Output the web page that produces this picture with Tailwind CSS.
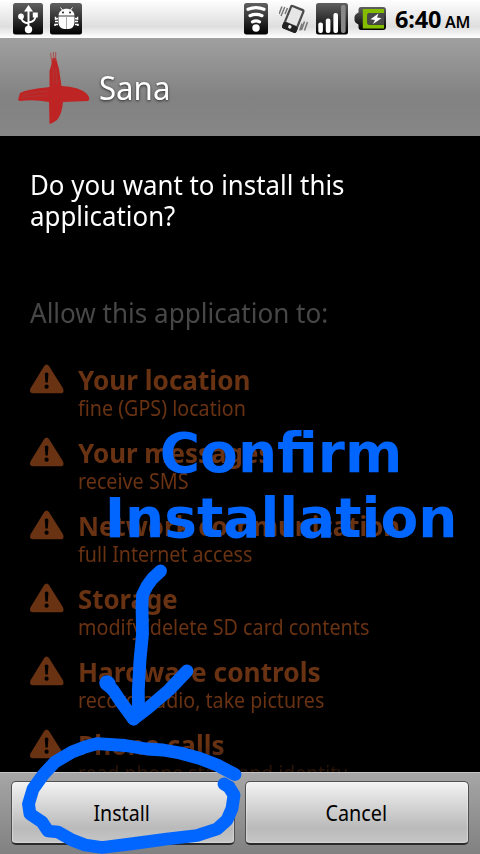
<!DOCTYPE html>
<html lang="en">
<head>
<meta charset="utf-8">
<title>Sana</title>
<script src="https://cdn.jsdelivr.net/npm/@tailwindcss/browser@4"></script>
</head>
<body class="bg-black">
<svg class="hidden">
  <symbol id="warn" viewBox="0 0 34 30">
    <path fill="#693212" d="M14.200 2 Q16.600 -1 19 2 L32.800 24 Q35 29.300 30.500 29.300 H3 Q-1.500 29.300 .7 24 Z"/>
    <path fill="#000" d="M14.800 9.500 Q16.600 7.500 18.400 9.500 L17.800 18.500 H15.400 Z"/>
    <circle cx="16.600" cy="22.700" r="2.100" fill="#000"/>
  </symbol>
</svg>
<div class="relative flex h-[854px] w-[480px] flex-col overflow-hidden bg-black font-['Noto_Sans','Open_Sans',sans-serif]">

  <header class="flex h-[38px] shrink-0 items-start bg-linear-to-b from-white via-[#dedede] via-70% to-white pl-[13px] pr-[9px] pt-[3px]">
    <svg class="h-8 w-[30px]" viewBox="0 0 30 32">
      <defs><linearGradient id="tile" x1="0" y1="0" x2="0" y2="1"><stop offset="0" stop-color="#606060"/><stop offset=".5" stop-color="#303030"/><stop offset="1" stop-color="#000"/></linearGradient></defs>
      <rect width="30" height="31.500" rx="2.500" fill="url(#tile)"/>
      <path d="M15.500 26V6M15.500 20.500C10 19.500 8 17.500 8 13.500M15.500 19.500C21 18.500 22.500 16.500 22.500 12" fill="none" stroke="#fff" stroke-width="2"/>
      <path d="M15.500 2 20 8.500H11Z" fill="#fff"/><circle cx="15.500" cy="26.500" r="3.700" fill="#fff"/><circle cx="8" cy="13.500" r="2.900" fill="#fff"/><rect x="19.800" y="9.500" width="5" height="5" fill="#fff"/>
    </svg>
    <svg class="ml-[7px] h-8 w-8" viewBox="0 0 32 32">
      <rect width="32" height="31.500" rx="2.500" fill="url(#tile)"/>
      <path d="M8.500 12.500C9 3.500 24 3.500 24.500 12.500Z" fill="#fff"/>
      <path d="M12.500 7 10.500 4.500M20.500 7 22.500 4.500" stroke="#fff"/>
      <path d="M8.500 13.500H24.500V20Q24 25.500 18.500 26H14.500Q9 25.500 8.500 20Z" fill="#fff"/>
      <path d="M16.500 13.500V26" stroke="#aaa"/><circle cx="13" cy="9.500" r="1" fill="#222"/><circle cx="20" cy="9.500" r="1" fill="#222"/>
      <path d="M8 18.500H5M8 21.500H5V23M8 15.500 5.500 16V13.800M25 18.500H28M25 21.500H28V23M25 15.500 27.500 16V13.800" fill="none" stroke="#fff" stroke-width="1.500"/>
    </svg>
    <div class="grow"></div>
    <svg class="h-8 w-6" viewBox="0 0 24 32">
      <rect width="24" height="31.500" rx="2.500" fill="url(#tile)"/>
      <circle cx="12" cy="25" r="3.700" fill="#fff"/>
      <path d="M8.500 18.800Q12 17 15.500 18.800M6 12.700Q12 10 18 12.700M4 6.300Q12 3 20 6.300" fill="none" stroke="#fff" stroke-width="3.200" stroke-linecap="round"/>
    </svg>
    <svg class="ml-[11px] mr-[3px] h-8 w-[30px]" viewBox="0 0 30 32">
      <g transform="rotate(22 14 16)"><rect x="6.500" y="3" width="15.500" height="25.500" rx="2.200" fill="#4a4a4a"/><rect x="8.700" y="5.200" width="11.100" height="16" fill="#e6e6e6"/><rect x="6.500" y="21.700" width="15.500" height="6.800" rx="2" fill="#222"/><circle cx="14" cy="24.500" r="1.700" fill="#eee"/></g>
      <path d="M3 3.500 0 11M5.800 4 2 13M8.500 5 6 11M28.500 19 25.500 27.500M25.500 18.500 22.500 27M23 20.500 20.800 27.500" stroke="#777" stroke-width="1.500"/>
    </svg>
    <svg class="ml-[4px] h-8 w-8" viewBox="0 0 32 32">
      <rect width="32" height="31.500" rx="2.500" fill="url(#tile)"/>
      <g fill="#fff"><rect x="2.300" y="19.500" width="4.600" height="10.500" rx="2"/><rect x="9.800" y="15.500" width="4.600" height="14.500" rx="2"/><rect x="17.400" y="10" width="4.600" height="20" rx="2"/></g><rect x="25" y="2" width="4.600" height="28" rx="2" fill="#888"/>
    </svg>
    <svg class="ml-[6px] mt-[4px] h-[24px] w-[32px]" viewBox="0 0 32 24">
      <path d="M7 0H29Q32 0 32 3V20Q32 23 29 23H7Q4.500 23 4.500 20V17.500Q.5 15.500 .5 13V10Q.5 7.500 4.500 5.500V3Q4.500 0 7 0Z" fill="url(#tile)"/>
      <path d="M8.800 2H30V6H15.500Q13.300 6 13.300 8V15.500Q13.300 17.800 15.500 17.800H30V21.500H8.800Z" fill="#84bd00"/><path d="M15.500 6H30V17.800H15.500Q13.300 17.800 13.300 15.500V8Q13.300 6 15.500 6Z" fill="#484848"/>
      <path d="M24.500 6.500 16.500 12.300 21 13 19 17 27.500 11.200 23 10.500Z" fill="#fff"/>
    </svg>
    <div class="ml-[9px] flex items-baseline whitespace-nowrap text-black">
      <span class="w-[46px] text-[23.500px] leading-[32px] font-bold tracking-[-0.200px]">6:40</span>
      <span class="ml-[4px] w-[26px] text-[16px] font-semibold tracking-[-0.300px]">AM</span>
    </div>
  </header>

  <div class="flex h-[98px] shrink-0 items-center bg-linear-to-b from-[#a0a0a0] via-[#828282] via-60% to-[#868686] pl-[18px]">
    <svg class="h-[74px] w-[72px]" viewBox="0 0 72 74">
      <path fill="#be2424" d="M31.500 21 33.500 14 34.500 8 38 8 39 12 41 19 43.500 36Q61 36.500 69 44Q73 49 70 51L45 52Q44 64 39 70Q35 73 31.500 74L31 52Q16 49 2 51L0 50 2 43Q8 39.500 31.500 37Z"/>
      <path d="M34 13 32.500 3M35.800 11 35.300 2M37.500 12 37.700 2" stroke="#b43c3c" stroke-width="1.200" opacity=".7"/>
      <path d="M4 46Q12 42 30 41M4 48Q16 45 29 46M35 16 36 34M38 18 39 34" fill="none" stroke="#a84040" stroke-width="1.200" opacity=".6"/>
    </svg>
    <h1 class="ml-[9px] mt-[2px] origin-left scale-x-[.945] text-[33px] leading-[40px] text-white text-shadow-[0_1px_3px_#000000b0]">Sana</h1>
  </div>

  <main class="flex h-[636px] shrink-0 flex-col overflow-hidden pl-[30px] pt-[33px] whitespace-nowrap">
    <p class="origin-left scale-x-[.957] text-[27px] leading-[31px] text-white">Do you want to install this<br>application?</p>
    <p class="mt-[66px] origin-left scale-x-[.965] text-[27px] leading-[31px] text-[#474747]">Allow this application to:</p>
    <ul class="mt-[36px] text-[#693212]">
      <li class="flex h-[73px]"><svg class="h-[30px] w-[34px]"><use href="#warn"/></svg><div class="ml-[14px]"><h2 class="origin-left scale-x-[.967] text-[27px] leading-[31px] font-bold">Your location</h2><p class="mt-[1px] origin-left scale-x-[.937] text-[21px] leading-[25px]">fine (GPS) location</p></div></li>
      <li class="flex h-[73px]"><svg class="h-[30px] w-[34px]"><use href="#warn"/></svg><div class="ml-[14px]"><h2 class="origin-left scale-x-[.96] text-[27px] leading-[31px] font-bold">Your messages</h2><p class="mt-[1px] origin-left scale-x-[.94] text-[21px] leading-[25px]">receive SMS</p></div></li>
      <li class="flex h-[73px]"><svg class="h-[30px] w-[34px]"><use href="#warn"/></svg><div class="ml-[14px]"><h2 class="origin-left scale-x-[.957] text-[27px] leading-[31px] font-bold">Network communication</h2><p class="mt-[1px] origin-left scale-x-[.935] text-[21px] leading-[25px]">full Internet access</p></div></li>
      <li class="flex h-[73px]"><svg class="h-[30px] w-[34px]"><use href="#warn"/></svg><div class="ml-[14px]"><h2 class="origin-left scale-x-[.955] text-[27px] leading-[31px] font-bold">Storage</h2><p class="mt-[1px] origin-left scale-x-[.94] text-[21px] leading-[25px]">modify/delete SD card contents</p></div></li>
      <li class="flex h-[73px]"><svg class="h-[30px] w-[34px]"><use href="#warn"/></svg><div class="ml-[14px]"><h2 class="origin-left scale-x-[.973] text-[27px] leading-[31px] font-bold">Hardware controls</h2><p class="mt-[1px] origin-left scale-x-[.935] text-[21px] leading-[25px]">record audio, take pictures</p></div></li>
      <li class="flex h-[73px]"><svg class="h-[30px] w-[34px]"><use href="#warn"/></svg><div class="ml-[14px]"><h2 class="origin-left scale-x-[.967] bg-linear-to-b from-[#693212] from-50% to-[#4a230c] bg-clip-text text-[27px] leading-[31px] font-bold text-transparent">Phone calls</h2><p class="mt-[1px] origin-left scale-x-[.925] text-[21px] leading-[25px] text-[#2a1307]">read phone state and identity</p></div></li>
    </ul>
  </main>

  <footer class="flex h-[82px] shrink-0 gap-[10px] border-t border-[#c4c4c4] bg-linear-to-b from-[#a6a6a6] to-[#818181] px-[11px] pt-[8px]">
    <button class="h-[64px] w-[224px] rounded-[5px] border border-[#505050] border-b-2 border-b-[#2a2a2a] bg-linear-to-b from-[#f3f3f3] via-[#bababa] via-75% to-[#c6c6c6] text-[22px] text-black inset-shadow-[0_0_2px_#ffffff]"><span class="inline-block -translate-x-px scale-x-[.89]">Install</span></button>
    <button class="h-[64px] w-[224px] rounded-[5px] border border-[#505050] border-b-2 border-b-[#2a2a2a] bg-linear-to-b from-[#f3f3f3] via-[#bababa] via-75% to-[#c6c6c6] text-[22px] text-black inset-shadow-[0_0_2px_#ffffff]"><span class="inline-block -translate-x-px scale-x-[.9]">Cancel</span></button>
  </footer>

  <!-- Hand-drawn annotation -->
  <div class="absolute left-[81px] top-[421px] w-[400px] text-center font-['DejaVu_Sans',sans-serif] text-[55px] leading-[65px] font-bold text-[#0066ff]">Confirm<br>Installation</div>
  <svg class="absolute left-0 top-0 h-[854px] w-[480px]" viewBox="0 0 480 854" fill="none" stroke="#0066ff" stroke-width="12.800" stroke-linecap="round" stroke-linejoin="round">
    <path d="M160.500 571 152.500 578.500 147 586 142.500 595 142 605 142.500 634 140 660 138.300 690 138.500 708 133.500 719"/>
    <path d="M107 684 113 690 121 702 133.500 719 148 708 169 690 187 671"/>
    <path d="M107 683 108 684" stroke-width="15.500"/>
    <path d="M126 708 133 717 142 710Z" fill="#0066ff" stroke-width="6"/>
    <path d="M235 774.500 217 765 200 758.500 180 753 163 750 147 749 125 745.500 97 743.700 85 747 72 752 55 762 43 775 33 789 28.500 804 30 814 42 822 48 831 58 832 72 840 85 845 102 847.500 133 843.700 167 839 197 835.500 217 829 227 820 232 808.500 234 795 229 787 224 784"/>
  </svg>
</div>
</body>
</html>
